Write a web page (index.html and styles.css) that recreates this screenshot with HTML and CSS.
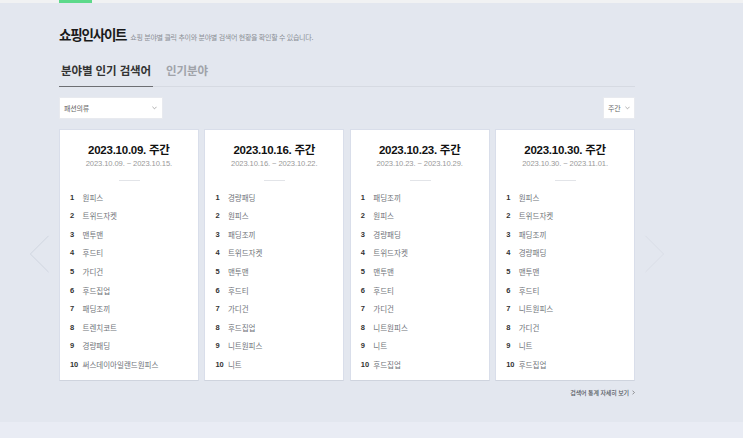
FILE: index.html
```html
<!DOCTYPE html>
<html lang="ko">
<head>
<meta charset="utf-8">
<title>쇼핑인사이트</title>
<link rel="stylesheet" href="styles.css">
</head>
<body>
<div class="topbar"><div class="topbar-active"></div></div>
<main class="section">
  <div class="container">
    <header class="heading">
      <h2 class="heading-title">쇼핑인사이트</h2>
      <p class="heading-desc">쇼핑 분야별 클릭 추이와 분야별 검색어 현황을 확인할 수 있습니다.</p>
    </header>
    <nav class="tabs">
      <a class="tab tab-active">분야별 인기 검색어</a>
      <a class="tab">인기분야</a>
    </nav>
    <div class="filters">
      <div class="select select-wide"><span>패션의류</span><svg class="caret" viewBox="0 0 6 4"><path d="M.5.5 3 3 5.500.5"/></svg></div>
      <div class="select select-narrow"><span>주간</span><svg class="caret" viewBox="0 0 6 4"><path d="M.5.5 3 3 5.500.5"/></svg></div>
    </div>
    <div class="carousel">
      <svg class="arrow arrow-prev" viewBox="0 0 22 40"><path d="M20.500 1 1.500 20l19 19"/></svg>
      <svg class="arrow arrow-next" viewBox="0 0 22 40"><path d="M1.500 1l19 19-19 19"/></svg>
      <div class="cards">
        <article class="card">
          <h3 class="card-title">2023.10.09. 주간</h3>
          <p class="card-range">2023.10.09. ~ 2023.10.15.</p>
          <ol class="rank">
            <li><b>1</b><span>원피스</span></li>
            <li><b>2</b><span>트위드자켓</span></li>
            <li><b>3</b><span>맨투맨</span></li>
            <li><b>4</b><span>후드티</span></li>
            <li><b>5</b><span>가디건</span></li>
            <li><b>6</b><span>후드집업</span></li>
            <li><b>7</b><span>패딩조끼</span></li>
            <li><b>8</b><span>트렌치코트</span></li>
            <li><b>9</b><span>경량패딩</span></li>
            <li><b>10</b><span>써스데이아일랜드원피스</span></li>
          </ol>
        </article>
        <article class="card">
          <h3 class="card-title">2023.10.16. 주간</h3>
          <p class="card-range">2023.10.16. ~ 2023.10.22.</p>
          <ol class="rank">
            <li><b>1</b><span>경량패딩</span></li>
            <li><b>2</b><span>원피스</span></li>
            <li><b>3</b><span>패딩조끼</span></li>
            <li><b>4</b><span>트위드자켓</span></li>
            <li><b>5</b><span>맨투맨</span></li>
            <li><b>6</b><span>후드티</span></li>
            <li><b>7</b><span>가디건</span></li>
            <li><b>8</b><span>후드집업</span></li>
            <li><b>9</b><span>니트원피스</span></li>
            <li><b>10</b><span>니트</span></li>
          </ol>
        </article>
        <article class="card">
          <h3 class="card-title">2023.10.23. 주간</h3>
          <p class="card-range">2023.10.23. ~ 2023.10.29.</p>
          <ol class="rank">
            <li><b>1</b><span>패딩조끼</span></li>
            <li><b>2</b><span>원피스</span></li>
            <li><b>3</b><span>경량패딩</span></li>
            <li><b>4</b><span>트위드자켓</span></li>
            <li><b>5</b><span>맨투맨</span></li>
            <li><b>6</b><span>후드티</span></li>
            <li><b>7</b><span>가디건</span></li>
            <li><b>8</b><span>니트원피스</span></li>
            <li><b>9</b><span>니트</span></li>
            <li><b>10</b><span>후드집업</span></li>
          </ol>
        </article>
        <article class="card">
          <h3 class="card-title">2023.10.30. 주간</h3>
          <p class="card-range">2023.10.30. ~ 2023.11.01.</p>
          <ol class="rank">
            <li><b>1</b><span>원피스</span></li>
            <li><b>2</b><span>트위드자켓</span></li>
            <li><b>3</b><span>패딩조끼</span></li>
            <li><b>4</b><span>경량패딩</span></li>
            <li><b>5</b><span>맨투맨</span></li>
            <li><b>6</b><span>후드티</span></li>
            <li><b>7</b><span>니트원피스</span></li>
            <li><b>8</b><span>가디건</span></li>
            <li><b>9</b><span>니트</span></li>
            <li><b>10</b><span>후드집업</span></li>
          </ol>
        </article>
      </div>
    </div>
    <a class="more">검색어 통계 자세히 보기<svg class="more-icon" viewBox="0 0 4 6"><path d="M.7.500 3.200 3 .7 5.500"/></svg></a>
  </div>
</main>
<div class="footer-band"></div>
</body>
</html>
```
FILE: styles.css
```css
* { box-sizing: border-box; margin: 0; padding: 0; }
html, body { height: 100%; }
body {
  display: flex;
  flex-direction: column;
  height: 438px;
  overflow: hidden;
  background: #e3e7ef;
  font-family: "Noto Sans CJK KR", "Liberation Sans", sans-serif;
  color: #222;
}
.topbar {
  flex: none;
  height: 3px;
  background: #f1f2f3;
  padding-left: 59px;
}
.topbar-active { width: 33px; height: 3px; background: #5cd98a; }
.section { flex: none; height: 419px; padding: 0 0 0 59px; }
.container { width: 576px; }
.heading {
  display: flex;
  align-items: baseline;
  gap: 4px;
  height: 27px;
  margin-top: 21px;
  white-space: nowrap;
}
.heading-title { font-size: 13.500px; line-height: 20px; font-weight: 700; letter-spacing: -1.200px; color: #1a1a1a; }
.heading-desc { font-size: 7px; line-height: 20px; letter-spacing: -.29px; color: #8b8f96; }
.tabs {
  display: flex;
  gap: 15px;
  height: 36px;
  padding: 9px 0 0 2px;
  border-bottom: 1px solid #d6dae2;
  position: relative;
}
.tab { font-size: 11.500px; line-height: 20px; font-weight: 700; color: #a0a3a9; letter-spacing: -.1px; white-space: nowrap; }
.tab-active { color: #333; }
.tab-active::after {
  content: "";
  position: absolute;
  left: 0;
  bottom: -1px;
  width: 94px;
  height: 1px;
  background: #6d6f73;
}
.filters {
  display: flex;
  justify-content: space-between;
  margin-top: 10px;
  height: 32px;
}
.select {
  display: flex;
  align-items: center;
  justify-content: space-between;
  height: 22px;
  background: #fff;
  border: 1px solid #e8eaef;
  font-size: 7px;
  color: #666;
  letter-spacing: -.2px;
}
.select-wide { width: 104px; padding: 0 5px 0 4px; }
.select-narrow { width: 32px; padding: 0 4px; }
.caret { width: 5px; height: 4px; fill: none; stroke: #888; stroke-width: .8; }
.carousel { position: relative; }
.arrow {
  position: absolute;
  top: 105px;
  width: 21px;
  height: 40px;
  fill: none;
  stroke: #cfd4de;
  stroke-width: 1;
}
.arrow-prev { left: -30px; }
.arrow-next { right: -30px; stroke: #d9dde6; }
.cards { display: grid; grid-template-columns: repeat(4, 139.750px); gap: 5.670px; }
.card {
  height: 252px;
  background: #fff;
  border: 1px solid #d9deea;
  border-bottom-color: #cfd4de;
  padding-top: 13px;
  text-align: center;
}
.card-title { font-size: 11.500px; line-height: 15px; font-weight: 700; letter-spacing: -.25px; color: #111; font-family: "Liberation Sans", "Noto Sans CJK KR", sans-serif; }
.card-range { font-size: 7.600px; line-height: 11px; color: #999; letter-spacing: -.1px; font-family: "Liberation Sans", "Noto Sans CJK KR", sans-serif; }
.rank {
  list-style: none;
  margin-top: 11px;
  text-align: left;
  padding: 8px 0 0 10px;
  position: relative;
}
.rank::before {
  content: "";
  position: absolute;
  left: 59px;
  top: 0;
  width: 21px;
  height: 1px;
  background: #e2e4e8;
}
.rank li { display: flex; height: 18.550px; align-items: center; font-size: 7.500px; }
.rank b { width: 12.500px; font-family: "Liberation Sans", sans-serif; font-weight: 700; font-size: 7.500px; color: #333; letter-spacing: -.1px; }
.rank span { color: #6f7379; white-space: nowrap; }
.more {
  display: flex;
  align-items: center;
  justify-content: flex-end;
  gap: 3px;
  height: 12px;
  margin-top: 5px;
  font-size: 6px;
  font-weight: 500;
  color: #555a62;
  letter-spacing: -.12px;
  white-space: nowrap;
}
.more-icon { width: 3px; height: 5px; fill: none; stroke: #555; stroke-width: .8; }
.footer-band { flex: 1; background: #e9ecf4; }
```
